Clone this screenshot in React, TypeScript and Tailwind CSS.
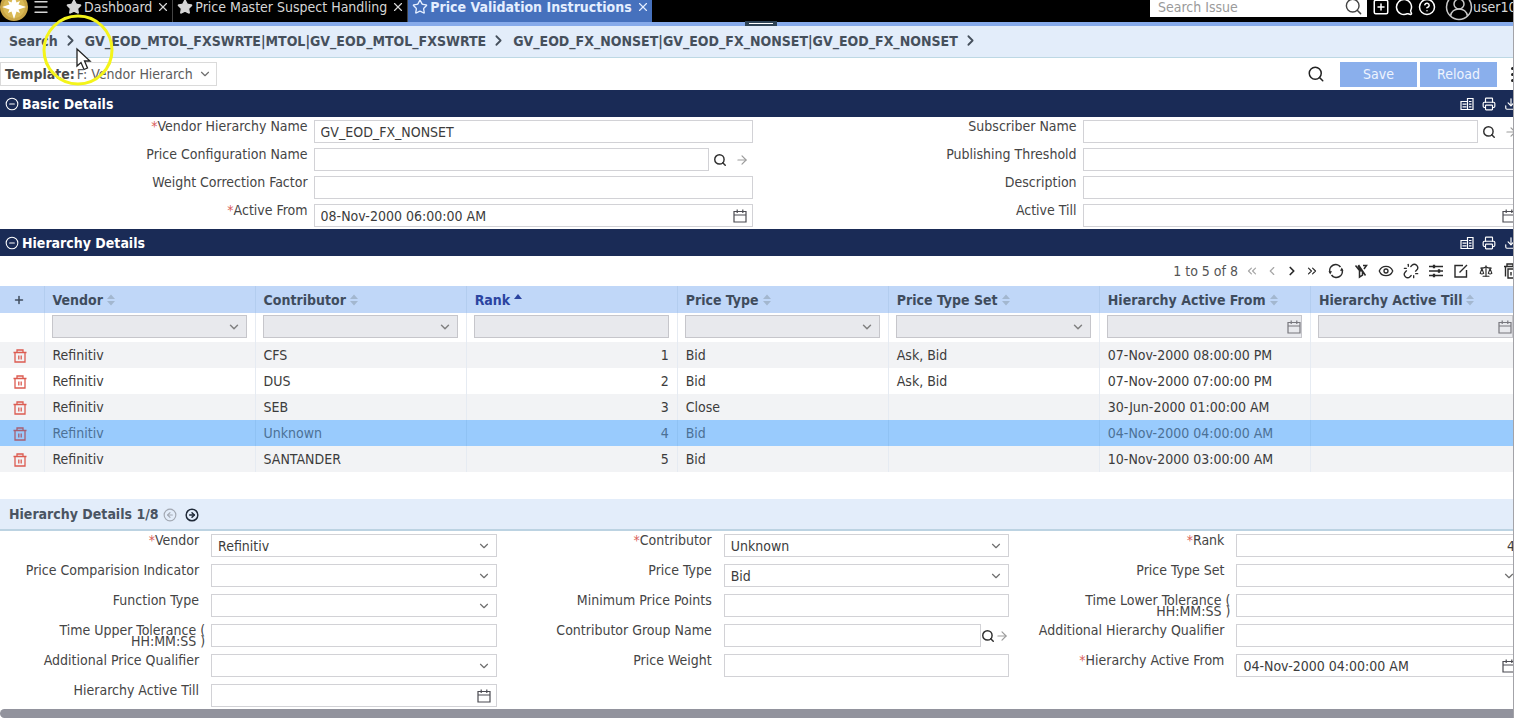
import { useId } from "react"
import type { ReactNode } from "react"
import {
  ArrowRight,
  ChevronDown,
  ChevronLeft,
  ChevronRight,
  ChevronsLeft,
  ChevronsRight,
  CircleArrowLeft,
  CircleArrowRight,
  CircleHelp,
  CircleMinus,
  Download,
  Eye,
  Menu,
  MessageCircle,
  Plus,
  Printer,
  Scale,
  Search,
  SquarePlus,
  Star,
  Unlink,
  X,
} from "lucide-react"

type Kind = "text" | "select" | "date" | "lookup"

interface FieldProps {
  label: ReactNode
  value?: string
  kind?: Kind
  required?: boolean
  wrap?: boolean
  alignRight?: boolean
  compact?: boolean
}

const basicFields: FieldProps[] = [
  { label: "Vendor Hierarchy Name", value: "GV_EOD_FX_NONSET", required: true },
  { label: "Subscriber Name", kind: "lookup" },
  { label: "Price Configuration Name", kind: "lookup" },
  { label: "Publishing Threshold" },
  { label: "Weight Correction Factor" },
  { label: "Description" },
  { label: "Active From", value: "08-Nov-2000 06:00:00 AM", kind: "date", required: true },
  { label: "Active Till", kind: "date" },
]

const detailFields: FieldProps[] = [
  { label: "Vendor", value: "Refinitiv", kind: "select", required: true },
  { label: "Contributor", value: "Unknown", kind: "select", required: true },
  { label: "Rank", value: "4", required: true, alignRight: true },
  { label: "Price Comparision Indicator", kind: "select" },
  { label: "Price Type", value: "Bid", kind: "select" },
  { label: "Price Type Set", kind: "select" },
  { label: "Function Type", kind: "select" },
  { label: "Minimum Price Points" },
  { label: <>Time Lower Tolerance (<br />HH:MM:SS )</>, wrap: true },
  { label: <>Time Upper Tolerance (<br />HH:MM:SS )</>, wrap: true },
  { label: "Contributor Group Name", kind: "lookup" },
  { label: "Additional Hierarchy Qualifier" },
  { label: "Additional Price Qualifier", kind: "select" },
  { label: "Price Weight" },
  { label: "Hierarchy Active From", value: "04-Nov-2000 04:00:00 AM", kind: "date", required: true },
  { label: "Hierarchy Active Till", kind: "date" },
]

const columns: { name: string; filter: Kind }[] = [
  { name: "Vendor", filter: "select" },
  { name: "Contributor", filter: "select" },
  { name: "Rank", filter: "text" },
  { name: "Price Type", filter: "select" },
  { name: "Price Type Set", filter: "select" },
  { name: "Hierarchy Active From", filter: "date" },
  { name: "Hierarchy Active Till", filter: "date" },
]

const rows = [
  ["Refinitiv", "CFS", "1", "Bid", "Ask, Bid", "07-Nov-2000 08:00:00 PM", ""],
  ["Refinitiv", "DUS", "2", "Bid", "Ask, Bid", "07-Nov-2000 07:00:00 PM", ""],
  ["Refinitiv", "SEB", "3", "Close", "", "30-Jun-2000 01:00:00 AM", ""],
  ["Refinitiv", "Unknown", "4", "Bid", "", "04-Nov-2000 04:00:00 AM", ""],
  ["Refinitiv", "SANTANDER", "5", "Bid", "", "10-Nov-2000 03:00:00 AM", ""],
]

function CalendarIcon() {
  return (
    <svg viewBox="0 0 14 14" className="size-3.5" fill="none" stroke="currentColor" strokeWidth="1.2">
      <path d="M1 2.5h12v10.5H1zM1 6h12M4.2 .5v3.5M9.8 .5v3.5" />
    </svg>
  )
}

function TrashIcon() {
  return (
    <svg viewBox="0 0 14 14" className="size-3.5" fill="none" stroke="currentColor" strokeWidth="1.3">
      <path d="M.5 3.5h13M4 3.5V1h6v2.5M2 3.5v9.5h10V3.5M5.8 6.5v4M8.2 6.5v4" />
    </svg>
  )
}

function ReportIcon() {
  return (
    <svg viewBox="0 0 14 14" className="size-3.5" fill="none" stroke="currentColor" strokeWidth="1.2">
      <path d="M7.5 12.5V1.5H13v11H1v-8h6.500M2.500 7.200h4M2.500 9.800h4M9 4.500h2.500M9 7.200h2.500M9 9.800h2.500" />
    </svg>
  )
}

function FilterOffIcon() {
  return (
    <svg viewBox="0 0 16 16" className="size-4" fill="none" stroke="currentColor" strokeWidth="1.5">
      <path d="M2.5 2.5l4 5V14l3-2V8.5M5.5 2l7 10.5M10 2.5h3.5L11 6M5 2.5l3.5 6" />
    </svg>
  )
}

function TrashStackIcon() {
  return (
    <svg viewBox="0 0 16 16" className="size-4" fill="none" stroke="currentColor" strokeWidth="1.4">
      <path d="M1 3.5h12M4 3V1h6v2M2.5 4v9.5M5 6h9v9H5zM8 9v3.5M11 9v3.5" />
    </svg>
  )
}

function RefreshIcon() {
  return (
    <svg viewBox="0 0 16 16" className="size-4" fill="none" stroke="currentColor" strokeWidth="1.5">
      <path d="M2 9.5A6 6 0 0 1 12.5 4M14 6.5A6 6 0 0 1 3.5 12" />
      <path d="M15.5 7.8H12l1.800-3.300zM.5 8.200H4l-1.800 3.300z" fill="currentColor" stroke="none" />
    </svg>
  )
}

function SlidersIcon() {
  return (
    <svg viewBox="0 0 16 16" className="size-4" fill="none" stroke="currentColor" strokeWidth="1.3">
      <path d="M1 3.5h14M1 8h14M1 12.5h14" />
      <path d="M5.5 2.5h1v2h-1zM10.500 7h1v2h-1zM5.500 11.500h1v2h-1z" fill="currentColor" />
    </svg>
  )
}

function EditIcon() {
  return (
    <svg viewBox="0 0 16 16" className="size-4" fill="none" stroke="currentColor" strokeWidth="1.4">
      <path d="M10 2.5H2V14h11.5V7M6.5 9.5L14 2" />
    </svg>
  )
}

function SortIcon() {
  return (
    <svg viewBox="0 0 8 12" className="h-3 w-2 shrink-0 text-[#a3b7cf]" fill="currentColor">
      <path d="M4 .5L8 5H0zM4 11.5L0 7h8z" />
    </svg>
  )
}

function Field({ label, value = "", kind = "text", required, wrap, alignRight, compact }: FieldProps) {
  const id = useId()
  const box = "h-[23px] w-full min-w-0 appearance-none rounded-none border border-[#d2d2d6] bg-white px-1.5 outline-none"
  return (
    <div className="flex items-start">
      <label
        htmlFor={id}
        className={`w-2/5 shrink-0 pt-px text-right leading-[11px] whitespace-nowrap text-[#454545] ${compact && !wrap ? "pr-1.5" : ""}`}
      >
        {required && <span className="text-[#d9605a]">*</span>}
        {label}
      </label>
      <div className="min-w-0 flex-1 pr-4 pl-1.5">
        <div className="relative flex items-center">
          {kind === "select" ? (
            <select id={id} className={box}>
              <option>{value}</option>
            </select>
          ) : (
            <input id={id} defaultValue={value} className={`${box} ${alignRight ? "text-right" : ""}`} />
          )}
          {kind === "select" && (
            <ChevronDown className="pointer-events-none absolute right-1.5 size-3.5 text-[#6f6f6f]" strokeWidth={2} />
          )}
          {kind === "date" && (
            <button type="button" aria-label="Pick a date" className="absolute right-1.5 text-[#4b4b52]">
              <CalendarIcon />
            </button>
          )}
          {kind === "lookup" && (
            <div className={`flex shrink-0 items-center ${compact ? "w-7" : "w-11 gap-2 pl-1"}`}>
              <button type="button" aria-label="Look up"><Search className="size-3.5 text-[#2f2f2f]" strokeWidth={2.5} /></button>
              <button type="button" aria-label="Open"><ArrowRight className="size-3.5 text-[#9b9b9b]" /></button>
            </div>
          )}
        </div>
      </div>
    </div>
  )
}

function SectionHeader({ title }: { title: string }) {
  return (
    <div className="flex h-[27px] items-center gap-[3px] bg-[#1a2b56] pr-5 pl-[5px] text-white">
      <CircleMinus className="size-3.5" strokeWidth={1.8} />
      <h2 className="flex-1 font-bold">{title}</h2>
      <div className="flex items-center gap-2">
        <button type="button" aria-label="Report"><ReportIcon /></button>
        <button type="button" aria-label="Print"><Printer className="size-3.5" /></button>
        <button type="button" aria-label="Download"><Download className="size-3.5" /></button>
      </div>
    </div>
  )
}

function Tab({ title, active }: { title: string; active?: boolean }) {
  return (
    <div
      className={`flex h-full items-center gap-0.5 pr-0.5 pl-1 ${active ? "bg-[#4671bd] font-bold text-[#e4eeff]" : "border-r border-[#444] text-[#d6d6d6]"}`}
    >
      <Star className="size-4" fill={active ? "none" : "currentColor"} />
      <a href="#" className="whitespace-nowrap">{title}</a>
      <button type="button" aria-label={`Close ${title}`} className="ml-0.5">
        <X className="size-3.5" strokeWidth={2} />
      </button>
    </div>
  )
}

function TopBar() {
  return (
    <header className="relative flex h-[26px] items-end border-b-4 border-[#86aaea] bg-black">
      {/* taller than the bar, so its upper part is cut */}
      <div className="flex h-[30px] w-full shrink-0 items-center text-white">
        <svg viewBox="0 0 28 28" className="size-7 shrink-0">
          <circle cx="14" cy="14" r="14" fill="#c9a545" />
          <circle cx="14" cy="14" r="11" fill="#d9b955" />
          <path d="M14 2l3 9 9 3-9 3-3 9-3-9-9-3 9-3z" fill="#fff" />
          <path d="M8 8l6 2.5L20 8l-2.500 6 2.500 6-6-2.500L8 20l2.500-6z" fill="#fff" />
        </svg>
        <button type="button" aria-label="Menu" className="ml-1 w-7 text-[#d6d6d6]">
          <Menu className="size-[18px]" strokeWidth={1.8} />
        </button>
        <nav className="ml-0.5 flex h-full">
          <Tab title="Dashboard" />
          <Tab title="Price Master Suspect Handling" />
          <Tab title="Price Validation Instructions" active />
        </nav>
        <div className="ml-auto flex items-center gap-[5px]">
          <div className="relative">
            <input
              aria-label="Search Issue"
              placeholder="Search Issue"
              className="block h-5 w-[217px] bg-white px-2 text-black placeholder:text-[#9a9a9a]"
            />
            <Search className="absolute top-0 right-1 size-[19px] text-[#444]" strokeWidth={1.8} />
          </div>
          <SquarePlus className="size-[18px]" />
          <MessageCircle className="size-[18px] -scale-x-100" />
          <CircleHelp className="size-[18px]" />
          <div className="ml-1 flex items-center">
            <svg viewBox="0 0 28 28" className="size-7" fill="none" stroke="#c8c8c8" strokeWidth="1.5">
              <circle cx="14" cy="14" r="12.5" />
              <circle cx="14" cy="11" r="5" />
              <path d="M5.5 23c1-5 4.500-7 8.500-7s7.500 2 8.500 7" />
            </svg>
            <span className="w-10 overflow-hidden whitespace-nowrap text-[#d6d6d6]">user10</span>
          </div>
        </div>
      </div>
      <div className="absolute top-[21px] left-1/2 flex h-[5px] w-8 -translate-x-3 items-start justify-center bg-[#2e4254] pt-0.5">
        <span className="h-px w-6 bg-white" />
      </div>
    </header>
  )
}

function Breadcrumbs() {
  const crumbs = [
    "Search",
    "GV_EOD_MTOL_FXSWRTE|MTOL|GV_EOD_MTOL_FXSWRTE",
    "GV_EOD_FX_NONSET|GV_EOD_FX_NONSET|GV_EOD_FX_NONSET",
  ]
  return (
    <nav className="flex h-8 items-center gap-1.5 border-b border-[#bdd8e4] bg-[#e3edfa] pb-0.5 pl-[9px] font-bold text-[#46505c]">
      {crumbs.map((crumb) => (
        <span key={crumb} className="flex items-center gap-1">
          <a href="#">{crumb}</a>
          <ChevronRight className="size-[17px]" strokeWidth={2.5} />
        </span>
      ))}
    </nav>
  )
}

function Toolbar() {
  return (
    <div className="flex h-8 items-center">
      <div className="relative flex h-6 w-[217px] items-center gap-0.5 border border-[#dadada] pl-1">
        <label htmlFor="template" className="font-bold text-[#4a4a4a]">Template:</label>
        <select id="template" className="w-[120px] appearance-none overflow-hidden bg-transparent text-[#5c5c5c] outline-none">
          <option>F: Vendor Hierarch</option>
        </select>
        <ChevronDown className="pointer-events-none absolute right-1 size-3.5 text-[#6f6f6f]" />
      </div>
      <div className="ml-auto flex items-center">
        <button type="button" aria-label="Search" className="mr-[15px]"><Search className="size-[18px] text-[#222]" /></button>
        <button type="button" className="mr-[3px] h-[25px] w-[77px] bg-[#8aafec] text-[#eef4fe]">Save</button>
        <button type="button" className="h-[25px] w-[77px] bg-[#8aafec] text-[#eef4fe]">Reload</button>
        <button type="button" aria-label="More" className="flex w-4 flex-col items-end gap-[3px]">
          <span className="h-[3px] w-0.5 rounded-l-full bg-[#222]" />
          <span className="h-[3px] w-0.5 rounded-l-full bg-[#222]" />
          <span className="h-[3px] w-0.5 rounded-l-full bg-[#222]" />
        </button>
      </div>
    </div>
  )
}

function TableActions() {
  return (
    <div className="flex h-[30px] items-center justify-end gap-[9px] pr-[19px] text-[#2a2a2a]">
      <div className="flex items-center gap-1.5">
        <span className="mr-px text-[#555]">1 to 5 of 8</span>
        <button type="button" aria-label="First page"><ChevronsLeft className="size-3.5 text-[#a5a5a5]" /></button>
        <button type="button" aria-label="Previous page"><ChevronLeft className="size-3.5 text-[#a5a5a5]" /></button>
        <button type="button" aria-label="Next page"><ChevronRight className="size-3.5" strokeWidth={3} /></button>
        <button type="button" aria-label="Last page"><ChevronsRight className="size-3.5" /></button>
      </div>
      <div className="flex items-center gap-[9px]">
        <button type="button" aria-label="Refresh"><RefreshIcon /></button>
        <button type="button" aria-label="Clear filter"><FilterOffIcon /></button>
        <button type="button" aria-label="View"><Eye className="size-4" /></button>
        <button type="button" aria-label="Unlink"><Unlink className="size-4" /></button>
        <button type="button" aria-label="Settings"><SlidersIcon /></button>
        <button type="button" aria-label="Edit"><EditIcon /></button>
        <button type="button" aria-label="Compare" className="px-px"><Scale className="size-3.5" /></button>
        <button type="button" aria-label="Delete all"><TrashStackIcon /></button>
      </div>
    </div>
  )
}

function HierarchyTable() {
  const filterBox = "block h-[23px] w-full appearance-none rounded-none border border-[#c6c6cb] bg-[#e8e9ed]"
  return (
    <div className="min-h-[213px] pr-4">
      <table className="w-full table-fixed border-collapse">
        <thead>
          <tr className="h-[27px] bg-[#c0d7f8] text-left text-[#3f4c5d]">
            <th className="w-11 border-r border-[#b3cdef] p-0 pl-[13px]">
              <button type="button" aria-label="Add row" className="block">
                <Plus className="size-3" strokeWidth={3} />
              </button>
            </th>
            {columns.map((col) => (
              <th key={col.name} className="border-r border-[#b3cdef] p-0 pl-2 whitespace-nowrap">
                <span className={`flex items-center gap-1 ${col.name === "Rank" ? "text-[#2b44a0]" : ""}`}>
                  {col.name}
                  {col.name === "Rank" ? (
                    <svg viewBox="0 0 8 12" className="h-3 w-2" fill="currentColor"><path d="M4 0l4 5H0z" /></svg>
                  ) : (
                    <SortIcon />
                  )}
                </span>
              </th>
            ))}
          </tr>
          <tr className="h-[29px] align-top">
            <td className="border-r border-[#e6ebf2]" />
            {columns.map((col) => (
              <td key={col.name} className="border-r border-[#e6ebf2] p-0 pt-0.5 pr-2 pl-[7px]">
                <div className="relative flex items-center">
                  {col.filter === "select" ? (
                    <select aria-label={`Filter ${col.name}`} className={filterBox}><option /></select>
                  ) : (
                    <input aria-label={`Filter ${col.name}`} className={filterBox} />
                  )}
                  {col.filter === "select" && (
                    <ChevronDown className="pointer-events-none absolute right-1.5 size-3.5 text-[#808080]" strokeWidth={2.5} />
                  )}
                  {col.filter === "date" && (
                    <span className="absolute right-px text-[#77777d]"><CalendarIcon /></span>
                  )}
                </div>
              </td>
            ))}
          </tr>
        </thead>
        <tbody>
          {rows.map((row) => {
            const selected = row[1] === "Unknown"
            return (
              <tr
                key={row[2]}
                className={`h-[26px] ${selected ? "bg-[#99cbfd] text-[#4c7196]" : "text-[#3c3c3c] odd:bg-[#f2f3f5] even:bg-white"}`}
              >
                <td className={`border-r p-0 pl-[13px] ${selected ? "border-[#8fc2f4]" : "border-[#e6ebf2]"}`}>
                  <button type="button" aria-label="Delete row" className={`block pt-0.5 ${selected ? "text-[#a75f72]" : "text-[#dc5b50]"}`}>
                    <TrashIcon />
                  </button>
                </td>
                {row.map((cell, i) => (
                  <td
                    key={i}
                    className={`border-r p-0 px-2 ${i === 2 ? "text-right" : ""} ${selected ? "border-[#8fc2f4]" : "border-[#e6ebf2]"}`}
                  >
                    {cell}
                  </td>
                ))}
              </tr>
            )
          })}
        </tbody>
      </table>
    </div>
  )
}

export default function App() {
  return (
    <div className="relative overflow-hidden border-r border-[#a3a3a8] bg-white font-['DejaVu_Sans_Condensed','DejaVu_Sans',sans-serif] text-[14px] leading-4">
      <TopBar />
      <Breadcrumbs />
      <Toolbar />
      {/* the panels run a little past the right edge of the window */}
      <main className="w-[calc(100%+25px)] text-[#3c3c3c]">
        <SectionHeader title="Basic Details" />
        <form className="grid grid-cols-2 gap-y-[5px] pt-[3px] pb-0.5">
          {basicFields.map((field, i) => (
            <Field key={i} {...field} />
          ))}
        </form>
        <SectionHeader title="Hierarchy Details" />
        <TableActions />
        <HierarchyTable />
        <div className="flex h-8 items-center gap-1 border-b-2 border-[#bcd3e2] bg-[#e3edfa] pl-[9px] text-[#4a5462]">
          <h3 className="font-bold">Hierarchy Details 1/8</h3>
          <button type="button" aria-label="Previous" className="mr-1 pt-0.5 text-[#a3a9b3]"><CircleArrowLeft className="size-3.5" /></button>
          <button type="button" aria-label="Next" className="pt-0.5 text-[#1f2937]"><CircleArrowRight className="size-3.5" strokeWidth={2.5} /></button>
        </div>
        <form className="grid grid-cols-3 gap-y-[7px] pt-[3px] pb-0.5">
          {detailFields.map((field, i) => (
            <Field key={i} {...field} compact />
          ))}
        </form>
      </main>
      <div className="h-[9px] rounded-l-full bg-[#92939d]" />
      {/* click highlight and pointer */}
      <svg viewBox="0 0 72 72" className="pointer-events-none absolute top-3.5 left-[42px] size-[72px]">
        <circle cx="36" cy="36" r="34" fill="none" stroke="#f4f41a" strokeWidth="3" />
        <path d="M35 35v17l4-3.5 3 7 3.5-1.5-3-7H48z" fill="#fff" stroke="#222" strokeWidth="1.3" />
      </svg>
    </div>
  )
}
